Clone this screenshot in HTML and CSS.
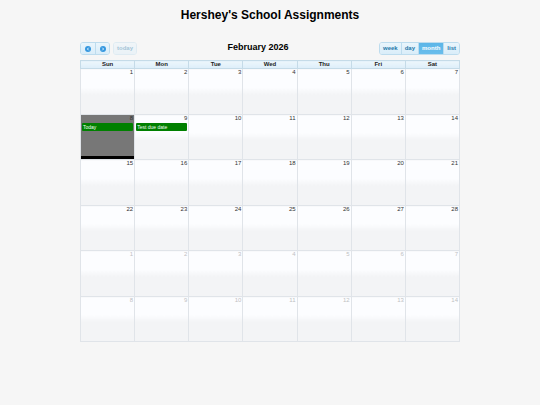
FILE: index.html
```html
<!DOCTYPE html>
<html lang="en">
<head>
<meta charset="utf-8">
<title>Hershey's School Assignments</title>
<link rel="stylesheet" href="styles.css">
</head>
<body>
<h1>Hershey's School Assignments</h1>
<main class="calendar">
  <div class="toolbar">
    <div class="left">
      <div class="group">
        <button type="button" class="arrow" aria-label="Previous month"><svg viewBox="0 0 6 6"><circle cx="3" cy="3" r="3"/><path d="M3.7 1.7 2.4 3l1.3 1.3"/></svg></button>
        <button type="button" class="arrow" aria-label="Next month"><svg viewBox="0 0 6 6"><circle cx="3" cy="3" r="3"/><path d="M2.3 1.7 3.6 3 2.3 4.3"/></svg></button>
      </div>
      <div class="group faded"><button type="button" disabled>today</button></div>
    </div>
    <h2>February 2026</h2>
    <div class="group">
      <button type="button">week</button>
      <button type="button">day</button>
      <button type="button" class="active">month</button>
      <button type="button">list</button>
    </div>
  </div>
  <table>
    <thead>
      <tr><th>Sun</th><th>Mon</th><th>Tue</th><th>Wed</th><th>Thu</th><th>Fri</th><th>Sat</th></tr>
    </thead>
    <tbody>
      <tr><td>1</td><td>2</td><td>3</td><td>4</td><td>5</td><td>6</td><td>7</td></tr>
      <tr><td class="today">8<a class="event" href="#">Today</a></td><td>9<a class="event" href="#">Test due date</a></td><td>10</td><td>11</td><td>12</td><td>13</td><td>14</td></tr>
      <tr><td>15</td><td>16</td><td>17</td><td>18</td><td>19</td><td>20</td><td>21</td></tr>
      <tr><td>22</td><td>23</td><td>24</td><td>25</td><td>26</td><td>27</td><td>28</td></tr>
      <tr class="other"><td>1</td><td>2</td><td>3</td><td>4</td><td>5</td><td>6</td><td>7</td></tr>
      <tr class="other"><td>8</td><td>9</td><td>10</td><td>11</td><td>12</td><td>13</td><td>14</td></tr>
    </tbody>
  </table>
</main>
</body>
</html>
```
FILE: styles.css
```css
* {
  box-sizing: border-box;
}

body {
  margin: 0;
  background: #f6f6f6;
  color: #000;
  font-family: "Liberation Sans", Arial, sans-serif;
}

h1 {
  margin: 8px 0 20px;
  font-size: 12px;
  line-height: 14px;
  text-align: center;
}

.calendar {
  margin: 0 80px;
}

.toolbar {
  display: flex;
  justify-content: space-between;
  align-items: flex-start;
  margin-bottom: 5px;
}

.left {
  display: flex;
  gap: 3px;
}

h2 {
  margin: 0;
  font-size: 9px;
  line-height: 11px;
}

.group {
  display: flex;
  height: 13px;
  overflow: hidden;
  border: 1px solid #bddcee;
  border-radius: 3px;
}

button {
  display: flex;
  align-items: center;
  margin: 0;
  padding: 0 3px;
  border: 0;
  background: linear-gradient(#e9f5fc, #d9edf9);
  color: #2779aa;
  font: bold 6px/11px "Liberation Sans", Arial, sans-serif;
}

button + button {
  border-left: 1px solid #bddcee;
}

button.active {
  background: linear-gradient(#5cb6e8, #69bdec);
  color: #fff;
}

.arrow {
  justify-content: center;
  width: 14px;
}

.arrow svg {
  flex: none;
  width: 6px;
  height: 6px;
}

.arrow circle {
  fill: #3597df;
}

.arrow path {
  fill: none;
  stroke: #e4f3fc;
  stroke-width: 1;
}

.faded {
  opacity: 0.4;
}

table {
  width: 100%;
  table-layout: fixed;
  border-collapse: collapse;
}

th {
  height: 8px;
  padding: 0;
  border: 1px solid #c5dbe8;
  background: linear-gradient(#edf6fb, #dceefa);
  color: #222;
  font-size: 6px;
  line-height: 7px;
}

tbody tr:nth-child(odd) {
  height: 46px;
}

tbody tr:nth-child(even) {
  height: 45px;
}

td {
  padding: 0 1px;
  border: 1px solid #e0e4e9;
  background: linear-gradient(#fcfdff 40%, #f3f4f6 56%);
  color: #333;
  font-size: 6px;
  line-height: 7px;
  text-align: right;
  vertical-align: top;
}

.other td {
  color: #bfc1c3;
}

td.today {
  background: #777 linear-gradient(#000, #000) bottom / 100% 3px no-repeat;
}

.event {
  display: block;
  height: 8px;
  margin-top: 1px;
  padding-left: 1px;
  border-radius: 1px;
  background: #008000;
  color: #f2fff2;
  font-size: 5px;
  line-height: 8px;
  text-align: left;
  text-decoration: none;
}
```
